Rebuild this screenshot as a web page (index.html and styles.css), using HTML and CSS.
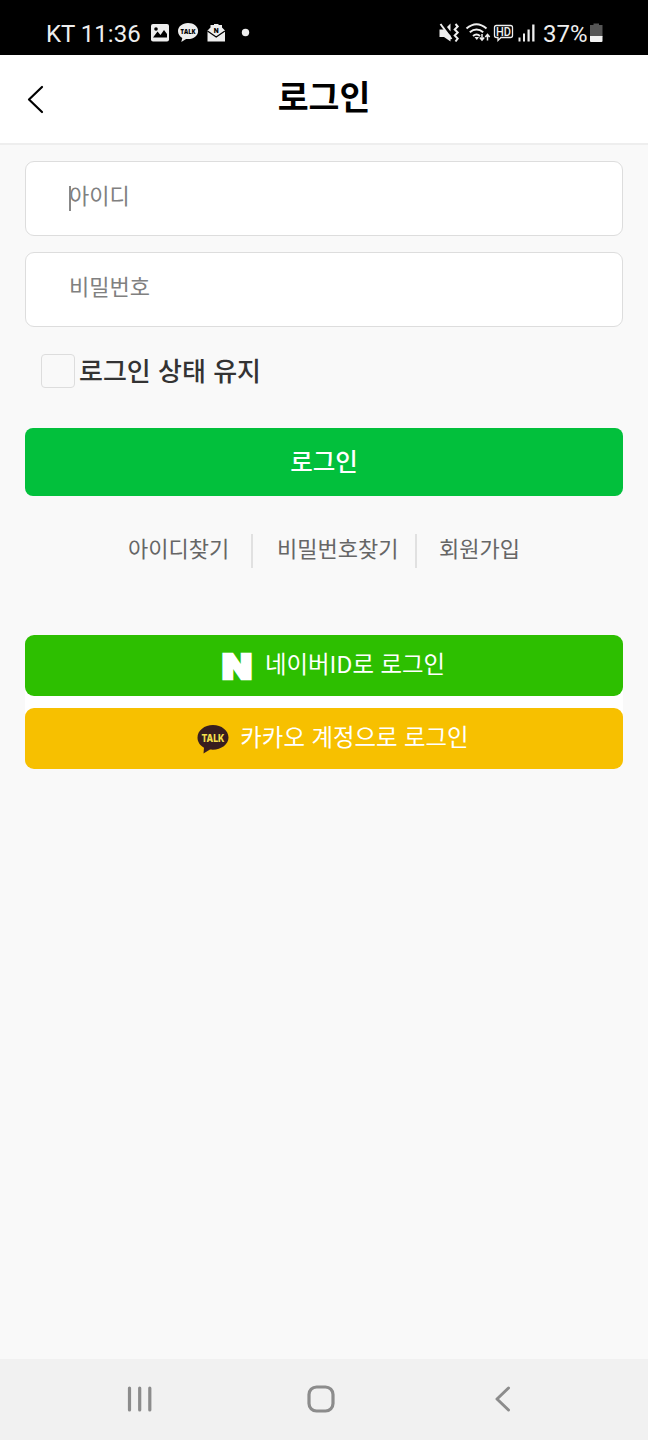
FILE: index.html
```
<!DOCTYPE html>
<html lang="ko">
<head>
  <meta charset="UTF-8" />
  <meta name="viewport" content="width=device-width, initial-scale=1.0" />
  <title>로그인</title>
  <link rel="stylesheet" href="styles.css">
</head>
<body>

  <!-- Status bar -->
  <div class="status-bar">
    <span class="carrier">KT 11:36</span>
    <svg class="status-left" width="102" height="24" viewBox="150 21 102 24">
      <rect x="151" y="24" width="18" height="17.500" rx="2" fill="#eee" />
      <path d="M153 37.500l4.500-6 3 3.500 3.500-5 3 4v3.500z" fill="#000" />
      <circle cx="156" cy="29" r="1.800" fill="#000" />
      <path d="M188 23c-5.800 0-10 3.700-10 8 0 3 1.700 5.600 4.300 7l-1 4 4.800-3c7 .8 12-3 12-8 0-4.500-4.400-8-10.100-8z" fill="#eee" />
      <text x="188" y="34" class="talk-small" textLength="15" lengthAdjust="spacingAndGlyphs">TALK</text>
      <path d="M207.500 30.500l3-3v-2.500h3.500v-1h4.500v1h3.500v2.500l3 3v11h-17.500z" fill="#eee" />
      <path d="M207.500 31l8.700 6 8.700-6" fill="none" stroke="#000" stroke-width="1.200" />
      <text x="216.300" y="32.800" class="mail-mark">N</text>
      <circle cx="245.500" cy="32.500" r="3.700" fill="#eee" />
    </svg>
    <svg class="status-right" width="98" height="24" viewBox="438 21 98 24">
      <path d="M439.500 29.500h4.500l6.500 6v6l-6.500-4.500h-4.500z" fill="#eee" />
      <path d="M447 27l3.500-3.500v8z" fill="#eee" />
      <path d="M440.500 24l11 15" stroke="#eee" stroke-width="2" />
      <path d="M455.500 24l2.200 2.500-3 3 3 3-3 3 3 3-2.200 3" fill="none" stroke="#eee" stroke-width="2" />
      <g fill="none" stroke="#eee" stroke-width="2">
        <path d="M466.500 28.500q10-8.500 20 0" />
        <path d="M469.800 32.300q6.700-5.500 13.400 0" />
        <path d="M473 36q3.500-3 7 0" />
      </g>
      <path d="M474.500 37h4.500l-2.200 3z" fill="#eee" />
      <path d="M482 34v6m-2.200-2.500l2.200 2.500 2.200-2.500M487.500 40.500v-6m-2.200 2.500l2.200-2.500 2.200 2.500" fill="none" stroke="#eee" stroke-width="1.500" />
      <path d="M496.500 25.500h14q2 0 2 2v8q0 2-2 2h-9.500l-3 3v-3h-1.500q-2 0-2-2v-8q0-2 2-2z" fill="none" stroke="#eee" stroke-width="1.300" />
      <text x="503.500" y="36" class="hd-mark" textLength="15" lengthAdjust="spacingAndGlyphs">HD</text>
      <g fill="#eee">
        <rect x="518.500" y="37.500" width="2" height="4" />
        <rect x="523" y="33.500" width="2" height="8" />
        <rect x="527.500" y="29.500" width="2.200" height="12" />
        <rect x="532.200" y="24.500" width="2.300" height="17" />
      </g>
    </svg>
    <span class="percent">37%</span>
    <svg class="battery" width="14" height="20" viewBox="0 0 14 20">
      <path d="M0 2h3.500V.500h5.500V2h3.500v12H0z" fill="#555" />
      <path d="M0 13h12.500v5q0 1-1 1H1q-1 0-1-1z" fill="#f2f2f2" />
    </svg>
  </div>

  <header class="header">
    <button class="back" aria-label="뒤로">
      <svg width="18" height="30" viewBox="0 0 18 30"><path d="M16 3L3 15.500l13 12.500" fill="none" stroke="#000" stroke-width="2.200" stroke-linecap="round" stroke-linejoin="round" /></svg>
    </button>
    <h1>로그인</h1>
  </header>

  <main class="content">
    <form class="login-form">
      <div class="field">
        <span class="caret"></span>
        <input type="text" placeholder="아이디" />
      </div>
      <div class="field">
        <input type="password" placeholder="비밀번호" />
      </div>
      <label class="keep">
        <input type="checkbox" />
        <span>로그인 상태 유지</span>
      </label>
      <button type="button" class="login-btn">로그인</button>
    </form>

    <nav class="links">
      <a class="find-id">아이디찾기</a>
      <a class="find-pw">비밀번호찾기</a>
      <a class="join">회원가입</a>
    </nav>

    <div class="social">
      <a class="social-btn naver">
        <svg width="33" height="46" viewBox="0 0 33 46"><text x="1" y="35.500" class="naver-mark" textLength="30" lengthAdjust="spacingAndGlyphs">N</text></svg>
        <span>네이버ID로 로그인</span>
      </a>
      <a class="social-btn kakao">
        <svg width="32" height="30" viewBox="0 0 32 30">
          <path d="M16 1C7.500 1 .500 6.500.500 13.500c0 4.500 2.600 8 6.500 10.200L6.500 29.500l6.500-4c10 1.200 18.500-4.500 18.500-12C31.500 6.500 24.500 1 16 1z" fill="#381e1f" />
          <text x="16" y="18" class="talk-mark" textLength="23" lengthAdjust="spacingAndGlyphs">TALK</text>
        </svg>
        <span>카카오 계정으로 로그인</span>
      </a>
    </div>
  </main>

  <!-- Navigation bar -->
  <footer class="nav-bar">
    <svg width="26" height="28" viewBox="0 0 26 28"><path d="M2.500 3v22M12.700 3v22M22.800 3v22" stroke="#8c8c8c" stroke-width="3.200" stroke-linecap="round" /></svg>
    <svg width="28" height="28" viewBox="0 0 28 28"><rect x="2" y="2" width="24" height="24" rx="7.500" fill="none" stroke="#8c8c8c" stroke-width="3.200" /></svg>
    <svg width="17" height="28" viewBox="0 0 17 28"><path d="M14.500 3L3 14l11.500 11" fill="none" stroke="#8c8c8c" stroke-width="3" stroke-linecap="round" stroke-linejoin="round" /></svg>
  </footer>

</body>
</html>
```
FILE: styles.css
```
* {
  box-sizing: border-box;
}

body {
  margin: 0;
  min-height: 1440px;
  display: flex;
  flex-direction: column;
  background: #f9f9f9;
  font-family: "Noto Sans CJK KR", sans-serif;
  color: #333;
}

svg {
  display: block;
  flex: none;
}

.status-bar {
  height: 55px;
  display: flex;
  align-items: flex-start;
  padding: 21px 44px 0 46px;
  background: #000;
  color: #eee;
  font-family: Roboto, sans-serif;
  font-size: 24px;
  line-height: 26px;
}

.carrier {
  width: 104px;
  white-space: nowrap;
}

.status-right {
  margin-left: auto;
}

.percent {
  width: 47px;
  margin-left: 7px;
}

.battery {
  margin-top: 2px;
}

.talk-small {
  font: 900 6.5px "Open Sans", sans-serif;
  text-anchor: middle;
  fill: #000;
}

.mail-mark {
  font: 900 7px Roboto, sans-serif;
  text-anchor: middle;
  fill: #000;
}

.hd-mark {
  font: 500 13px Roboto, sans-serif;
  text-anchor: middle;
  fill: #eee;
}

.header {
  height: 90px;
  display: grid;
  grid-template-columns: 80px 1fr 80px;
  align-items: start;
  background: #fff;
  border-bottom: 2px solid #eee;
}

.back {
  padding: 29px 0 0 26px;
  border: none;
  background: none;
}

.header h1 {
  margin: 16px 0 0;
  font-size: 33.6px;
  line-height: 50px;
  font-weight: 700;
  color: #000;
  text-align: center;
}

.content {
  flex: 1;
  padding: 16px 25px 0;
}

.field {
  position: relative;
  height: 75px;
  margin-bottom: 16px;
}

.field input {
  display: block;
  width: 100%;
  height: 100%;
  padding: 0 44px 9px 43px;
  border: 1.5px solid #ddd;
  border-radius: 9px;
  background: #fff;
  font-family: inherit;
  font-size: 22px;
  outline: none;
}

.field input::placeholder {
  color: #808080;
}

.caret {
  position: absolute;
  left: 44px;
  top: 25px;
  width: 1.5px;
  height: 25px;
  background: #888;
}

.keep {
  display: flex;
  align-items: center;
  height: 36px;
  margin: 25px 0 40px 16px;
}

.keep input {
  appearance: none;
  width: 34px;
  height: 34px;
  margin: 1px 4px 0 0;
  border: 1px solid #ddd;
  border-radius: 4px;
}

.keep span {
  font-size: 26px;
  line-height: 36px;
  font-weight: 500;
}

.login-btn {
  display: block;
  width: 100%;
  height: 68px;
  padding: 0 0 4px;
  border: none;
  border-radius: 8px;
  background: #02c03c;
  color: #fff;
  font-family: inherit;
  font-size: 24.5px;
  font-weight: 500;
}

.links {
  display: flex;
  height: 34px;
  margin-top: 38px;
  padding-left: 103px;
  color: #666;
  font-size: 22px;
  line-height: 27px;
}

.find-id {
  width: 125px;
  border-right: 2px solid #e1e1e1;
}

.find-pw {
  width: 164px;
  padding-left: 24px;
  border-right: 2px solid #e1e1e1;
}

.join {
  padding-left: 22px;
}

.social {
  display: flex;
  flex-direction: column;
  gap: 12px;
  margin-top: 67px;
  border-radius: 9px;
  background: #fff;
}

.social-btn {
  display: flex;
  align-items: center;
  justify-content: center;
  gap: 11px;
  height: 61px;
  border-radius: 9px;
  color: #fff;
  font-size: 23.4px;
  line-height: 34px;
}

.social-btn span {
  padding-bottom: 6px;
}

.naver {
  padding-left: 18px;
  background: #2dbf00;
}

.kakao {
  padding-left: 18px;
  background: #f7c000;
}

.naver-mark {
  font: 900 34px Inter, sans-serif;
  fill: #fff;
  stroke: #fff;
  stroke-width: 2.5px;
}

.talk-mark {
  font: 800 11px Inter, sans-serif;
  text-anchor: middle;
  fill: #f5e04c;
}

.nav-bar {
  height: 81px;
  display: flex;
  align-items: center;
  gap: 154px;
  padding: 0 0 2px 127px;
  background: #f1f1f1;
}

.nav-bar svg:last-child {
  margin-left: 5px;
}
```
